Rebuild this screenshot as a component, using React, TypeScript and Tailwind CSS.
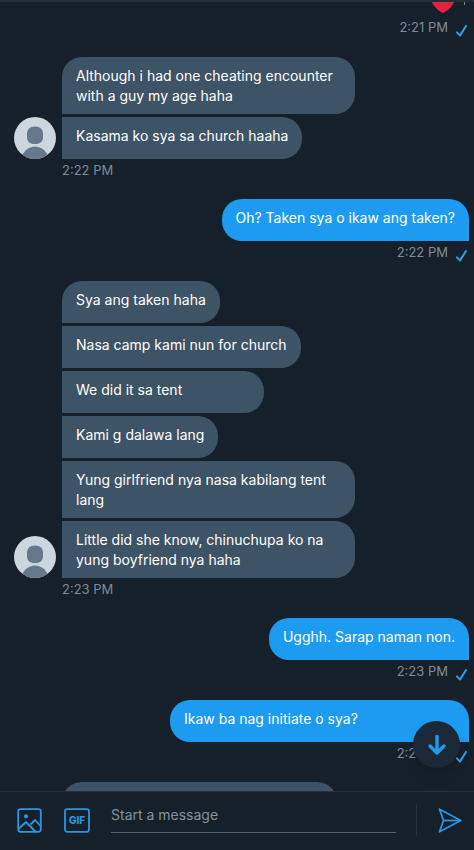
import { useState } from 'react';
import type { ReactNode } from 'react';
import clsx from 'clsx';

export default function App() {
  const [draft, setDraft] = useState('');

  return (
    <div className="flex h-screen flex-col bg-[#16202a] font-['Inter','Liberation_Sans',sans-serif] text-white">
      {/* Header edge */}
      <div className="h-0.5 shrink-0 bg-[#222d38]"></div>

      {/* Conversation */}
      <div className="relative min-h-0 flex-1">
        <main className="flex h-full flex-col overflow-hidden">
          <div className="flex shrink-0 flex-col pb-5">
            <div className="flex h-[15px] items-start justify-end gap-2.5 pr-[9px]">
              <HeartIcon />
              <div className="h-[3px] w-px bg-[#7f8c98]"></div>
            </div>
            <SentTime time="2:21 PM" />
          </div>

          <ReceivedGroup time="2:22 PM">
            <Bubble first>Although i had one cheating encounter with a guy my age haha</Bubble>
            <Bubble>Kasama ko sya sa church haaha</Bubble>
          </ReceivedGroup>

          <SentMessage time="2:22 PM">Oh? Taken sya o ikaw ang taken?</SentMessage>

          <ReceivedGroup time="2:23 PM">
            <Bubble first>Sya ang taken haha</Bubble>
            <Bubble>Nasa camp kami nun for church</Bubble>
            <Bubble className="min-w-[202px]">We did it sa tent</Bubble>
            <Bubble>Kami g dalawa lang</Bubble>
            <Bubble>Yung girlfriend nya nasa kabilang tent lang</Bubble>
            <Bubble>Little did she know, chinuchupa ko na yung boyfriend nya haha</Bubble>
          </ReceivedGroup>

          <SentMessage time="2:23 PM">Ugghh. Sarap naman non.</SentMessage>
          <SentMessage time="2:23 PM" className="min-w-[299px]">Ikaw ba nag initiate o sya?</SentMessage>

          {/* Next message, cut off by the composer */}
          <div className="shrink-0 pl-[62px]">
            <div className="h-[42px] w-[275px] rounded-[20px] rounded-bl-none bg-[#3d5466]"></div>
          </div>
        </main>

        <button
          type="button"
          aria-label="Scroll to latest message"
          className="absolute right-[14px] bottom-[23px] flex size-[47px] items-center justify-center rounded-full bg-[#1b2837] shadow-lg"
        >
          <svg viewBox="0 0 20 22" className="h-[22px] w-5" fill="none" stroke="#1d9bf0" strokeWidth="3.4" strokeLinecap="round" strokeLinejoin="round">
            <path d="M10 2.500v16M3 12l7 7 7-7" />
          </svg>
        </button>
      </div>

      {/* Composer */}
      <form
        className="flex h-[59px] shrink-0 items-start border-t border-[#26333e] pt-3 pr-3 pl-[17px]"
        onSubmit={(e) => e.preventDefault()}
      >
        <button type="button" aria-label="Add photo" className="mt-1 shrink-0">
          <ImageIcon />
        </button>
        <button type="button" aria-label="Add GIF" className="mt-1 ml-[22px] shrink-0">
          <GifIcon />
        </button>
        <input
          type="text"
          aria-label="Start a message"
          placeholder="Start a message"
          value={draft}
          onChange={(e) => setDraft(e.target.value)}
          className="ml-[21px] h-[29px] min-w-0 flex-1 border-b border-[#56636f] bg-transparent pb-2 text-[14px] text-white outline-none placeholder:text-[#84909b]"
        />
        <div className="ml-5 h-8 w-px bg-[#26333e]"></div>
        <button type="submit" aria-label="Send" className="mt-1 ml-[21px] shrink-0">
          <SendIcon />
        </button>
      </form>
    </div>
  );
}

// Message bubble on the left side
function Bubble({ first, className, children }: { first?: boolean; className?: string; children: ReactNode }) {
  return (
    <p
      className={clsx(
        'min-h-[42px] max-w-[293px] rounded-r-[20px] bg-[#3d5466] px-[14px] pt-[9px] pb-2 text-[14px] leading-5',
        first && 'rounded-tl-[20px]',
        className
      )}
    >
      {children}
    </p>
  );
}

function ReceivedGroup({ time, children }: { time: string; children: ReactNode }) {
  return (
    <section className="shrink-0 pb-[19px] pl-[14px]">
      <div className="flex items-end gap-1.5">
        <Avatar />
        <div className="flex flex-col items-start gap-[3px]">{children}</div>
      </div>
      <time className="mt-px ml-12 block text-[13px] leading-5 text-[#7f8c98]">{time}</time>
    </section>
  );
}

function SentMessage({ time, className, children }: { time: string; className?: string; children: ReactNode }) {
  return (
    <section className="flex shrink-0 flex-col items-end pb-[19px]">
      <p
        className={clsx(
          'mr-[5px] mb-px min-h-[42px] max-w-[300px] rounded-[20px] rounded-br-none bg-[#1d9bf0] px-[14px] pt-[9px] pb-2 text-[14px] leading-5',
          className
        )}
      >
        {children}
      </p>
      <SentTime time={time} />
    </section>
  );
}

function SentTime({ time }: { time: string }) {
  return (
    <div className="flex h-5 items-end justify-end gap-2 pr-[7px]">
      <time className="text-[13px] leading-5 text-[#7f8c98]">{time}</time>
      <svg viewBox="0 0 11 12" className="h-3 w-[11px]" fill="none" stroke="#2f9fea" strokeWidth="2" strokeLinecap="round" strokeLinejoin="round">
        <path d="M1 7.300 4 10.600 10 1" />
      </svg>
    </div>
  );
}

function Avatar() {
  return (
    <svg viewBox="0 0 42 42" className="size-[42px] shrink-0 rounded-full">
      <rect width="42" height="42" fill="#ccd6dd" />
      <path d="M21 9.500c5.500 0 8 3 8 7.500v3c0 4.500-2.500 7-8 7s-8-2.500-8-7v-3c0-4.500 2.500-7.500 8-7.500z" fill="#66788a" />
      <path d="M8 39c2.500-6 7.500-9.500 13-9.500S31.500 33 34 39v3H8z" fill="#66788a" />
    </svg>
  );
}

function HeartIcon() {
  return (
    <svg viewBox="0 0 22 11" className="h-[11px] w-[22px]">
      <path d="M0 0h22c-1.500 4-5.500 8-10 10.600a2 2 0 0 1-2 0C5.500 8 1.500 4 0 0z" fill="#e0243e" />
    </svg>
  );
}

function ImageIcon() {
  return (
    <svg viewBox="0 0 25 25" className="size-[25px]" fill="none" stroke="#2b95e2" strokeWidth="1.8" strokeLinejoin="round">
      <rect x="1.200" y="1.200" width="22.600" height="22.600" rx="2.200" />
      <circle cx="9" cy="8.300" r="2.100" fill="#2b95e2" stroke="none" />
      <path d="M1.500 21 9 14l9.500 9.500M13.500 16.500l4.500-4.500 5.500 6" />
    </svg>
  );
}

function GifIcon() {
  return (
    <svg viewBox="0 0 26 25" className="h-[25px] w-[26px]">
      <rect x="1" y="1.200" width="24" height="22.600" rx="2.200" fill="none" stroke="#2b95e2" strokeWidth="1.8" />
      <text x="13" y="16.200" textAnchor="middle" fontSize="10" fontWeight="800" fill="#2b95e2">GIF</text>
    </svg>
  );
}

function SendIcon() {
  return (
    <svg viewBox="0 0 24 25" className="h-[25px] w-6" fill="none" stroke="#2b95e2" strokeWidth="1.8" strokeLinejoin="round">
      <path d="M1.500 1.200 22.800 12.500 1.500 23.800 5.500 12.500z" />
      <path d="M5.500 12.500h17" />
    </svg>
  );
}
